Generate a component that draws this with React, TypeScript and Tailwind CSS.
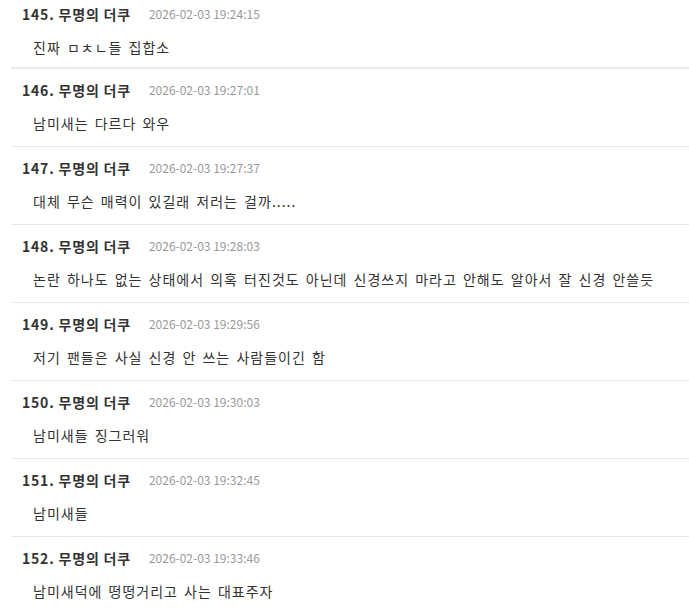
import React from 'react';

type Comment = {
  no: number;
  date: string;
  text: string;
};

const comments: Comment[] = [
  { no: 145, date: '2026-02-03 19:24:15', text: '진짜 ㅁㅊㄴ들 집합소' },
  { no: 146, date: '2026-02-03 19:27:01', text: '남미새는 다르다 와우' },
  { no: 147, date: '2026-02-03 19:27:37', text: '대체 무슨 매력이 있길래 저러는 걸까.....' },
  { no: 148, date: '2026-02-03 19:28:03', text: '논란 하나도 없는 상태에서 의혹 터진것도 아닌데 신경쓰지 마라고 안해도 알아서 잘 신경 안쓸듯' },
  { no: 149, date: '2026-02-03 19:29:56', text: '저기 팬들은 사실 신경 안 쓰는 사람들이긴 함' },
  { no: 150, date: '2026-02-03 19:30:03', text: '남미새들 징그러워' },
  { no: 151, date: '2026-02-03 19:32:45', text: '남미새들' },
  { no: 152, date: '2026-02-03 19:33:46', text: '남미새덕에 떵떵거리고 사는 대표주자' },
];

const App: React.FC = () => {
  return (
    <div
      className="bg-white w-[689px] h-[612px] overflow-hidden"
      style={{ fontFamily: '"Noto Sans CJK KR", "Noto Sans", sans-serif' }}
    >
      <ul className="-mt-[7px] ml-[11px]">
        {comments.map((c, i) => (
          <li
            key={c.no}
            className={
              i === 0
                ? 'border-b-2 border-[#ebebeb] pt-[11px] pb-[10px] pl-[11px]'
                : 'border-b border-[#e8e8e8] pt-[11px] pb-[13px] pl-[11px]'
            }
          >
            {/* author line */}
            <div className="flex items-center h-5">
              <span className="text-[14px] font-bold text-[#333] tracking-[0.8px]">
                {c.no}. 무명의 더쿠
              </span>
              <span className="ml-[18px] text-[12px] text-[#999]">{c.date}</span>
            </div>
            <p className="mt-[13px] h-5 leading-5 pl-[11px] text-[14px] text-[#333] tracking-[1px] [word-spacing:2px]">
              {c.text}
            </p>
          </li>
        ))}
      </ul>
    </div>
  );
};

export default App;
